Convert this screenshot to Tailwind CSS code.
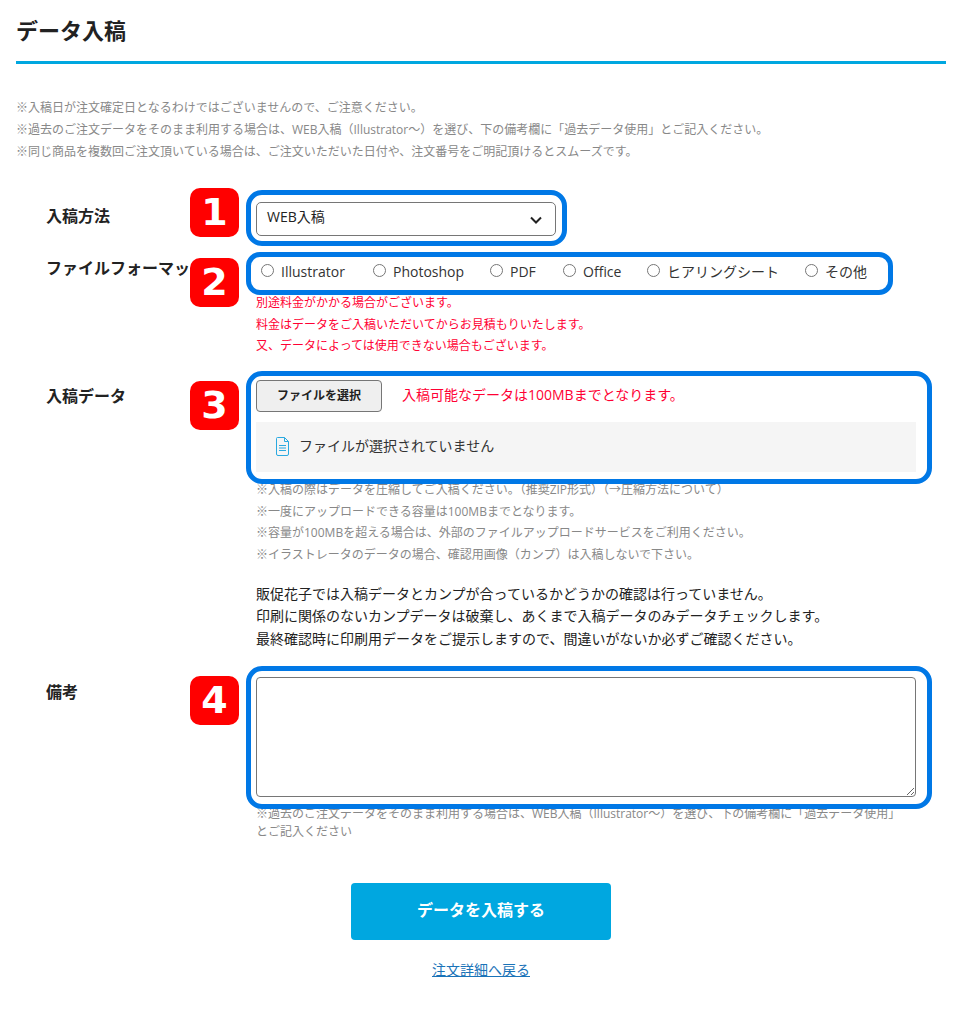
<!DOCTYPE html>
<html lang="ja">
<head>
<meta charset="utf-8">
<title>データ入稿</title>
<script src="https://cdn.jsdelivr.net/npm/@tailwindcss/browser@4"></script>
</head>
<body class="bg-white text-[#222] font-['Open_Sans','Noto_Sans_CJK_JP',sans-serif]">
<div class="relative w-[959px] h-[1023px] overflow-hidden pl-4 pr-[13px]">
  <h2 class="h-[64px] pt-[14px] border-b-[3px] border-[#00a7e0] text-[22px] leading-[32px] font-bold">データ入稿</h2>
  <div class="mt-[33px] text-[12px] leading-[22px] text-[#888]">
    <p>※入稿日が注文確定日となるわけではございませんので、ご注意ください。</p>
    <p>※過去のご注文データをそのまま利用する場合は、WEB入稿（Illustrator～）を選び、下の備考欄に「過去データ使用」とご記入ください。</p>
    <p>※同じ商品を複数回ご注文頂いている場合は、ご注文いただいた日付や、注文番号をご明記頂けるとスムーズです。</p>
  </div>

  <div class="mt-[39px] flex">
    <div class="w-[240px] shrink-0 pl-[30px] pt-[3px] text-[16px] leading-[22px] font-bold">入稿方法</div>
    <div class="relative w-[300px] h-[34px] border border-[#767676] rounded-[5px] pl-[10px] pb-[6px] flex items-center text-[14px]">
      <span>WEB入稿</span>
      <svg class="absolute right-[13px] top-[13px]" width="12" height="8" viewBox="0 0 12 8" fill="none" stroke="#222" stroke-width="2"><path d="M1 1.500 6 6.500 11 1.500"/></svg>
    </div>
  </div>

  <div class="mt-[21px] flex">
    <div class="w-[240px] shrink-0 pl-[30px] text-[16px] leading-[22px] font-bold whitespace-nowrap">ファイルフォーマット</div>
    <div>
      <div class="h-[28px] flex items-center text-[14px] text-[#333]">
        <label class="flex items-center w-[112px]"><input type="radio" name="f" class="w-[13px] h-[13px] ml-[5px] mr-[7px] mb-[2px]">Illustrator</label>
        <label class="flex items-center w-[117px]"><input type="radio" name="f" class="w-[13px] h-[13px] ml-[5px] mr-[7px] mb-[2px]">Photoshop</label>
        <label class="flex items-center w-[73px]"><input type="radio" name="f" class="w-[13px] h-[13px] ml-[5px] mr-[7px] mb-[2px]">PDF</label>
        <label class="flex items-center w-[84px]"><input type="radio" name="f" class="w-[13px] h-[13px] ml-[5px] mr-[7px] mb-[2px]">Office</label>
        <label class="flex items-center w-[158px]"><input type="radio" name="f" class="w-[13px] h-[13px] ml-[5px] mr-[7px] mb-[2px]">ヒアリングシート</label>
        <label class="flex items-center"><input type="radio" name="f" class="w-[13px] h-[13px] ml-[5px] mr-[7px] mb-[2px]">その他</label>
      </div>
      <div class="mt-[7px] text-[12px] leading-[21.5px] text-[#ff0033]">
        <p>別途料金がかかる場合がございます。</p>
        <p>料金はデータをご入稿いただいてからお見積もりいたします。</p>
        <p>又、データによっては使用できない場合もございます。</p>
      </div>
    </div>
  </div>

  <div class="mt-[23px] flex">
    <div class="w-[240px] shrink-0 pl-[30px] pt-[5px] text-[16px] leading-[22px] font-bold">入稿データ</div>
    <div class="w-[660px]">
      <div class="flex items-center h-[32px]">
        <button class="w-[126px] h-[32px] bg-[#efefef] border border-[#767676] rounded-[4px] text-[12px] font-bold">ファイルを選択</button>
        <span class="ml-[20px] text-[14px] text-[#ff0033] mb-[2px]">入稿可能なデータは100MBまでとなります。</span>
      </div>
      <div class="mt-[10px] h-[50px] bg-[#f5f5f5] flex items-center pl-[19px] text-[14px] text-[#333]">
        <svg width="15" height="19" viewBox="0 0 15 19" fill="none" stroke="#2aa9e0" stroke-width="1"><path d="M1.500 1.500a1 1 0 0 1 1-1h7l4 4v12.500a1.500 1.500 0 0 1-1.500 1.500h-9a1.500 1.500 0 0 1-1.500-1.500z"/><path d="M9.500 .5v4h4M4 8.500h7M4 11h7M4 13.500h7"/></svg>
        <span class="ml-[9px] mb-[2px]">ファイルが選択されていません</span>
      </div>
      <div class="mt-[7.5px] text-[12px] leading-[21.5px] text-[#888]">
        <p>※入稿の際はデータを圧縮してご入稿ください。（推奨ZIP形式）（→圧縮方法について）</p>
        <p>※一度にアップロードできる容量は100MBまでとなります。</p>
        <p>※容量が100MBを超える場合は、外部のファイルアップロードサービスをご利用ください。</p>
        <p>※イラストレータのデータの場合、確認用画像（カンプ）は入稿しないで下さい。</p>
      </div>
      <div class="mt-[17.5px] text-[14px] leading-[22.5px] text-[#222]">
        <p>販促花子では入稿データとカンプが合っているかどうかの確認は行っていません。</p>
        <p>印刷に関係のないカンプデータは破棄し、あくまで入稿データのみデータチェックします。</p>
        <p>最終確認時に印刷用データをご提示しますので、間違いがないか必ずご確認ください。</p>
      </div>
    </div>
  </div>

  <div class="mt-[27px] flex">
    <div class="w-[240px] shrink-0 pl-[30px] pt-[4px] text-[16px] leading-[22px] font-bold">備考</div>
    <div class="w-[660px]">
      <textarea class="block w-full h-[120px] border border-[#767676] rounded-[4px]"></textarea>
      <p class="mt-[8px] text-[12px] leading-[18px] text-[#888]">※過去のご注文データをそのまま利用する場合は、WEB入稿（Illustrator～）を選び、下の備考欄に「過去データ使用」<br>とご記入ください</p>
    </div>
  </div>

  <div class="mt-[42px] flex flex-col items-center">
    <button class="w-[260px] h-[57px] pb-[4px] bg-[#00a7e0] rounded-[4px] text-white text-[16px] font-bold">データを入稿する</button>
    <a href="#" class="mt-[19px] text-[14px] leading-[21px] text-[#1a73b8] underline">注文詳細へ戻る</a>
  </div>

  <div class="pointer-events-none absolute left-[246px] top-[190px] w-[321px] h-[56px] border-[5px] border-[#0078e6] rounded-[16px]"></div>
  <div class="pointer-events-none absolute left-[246px] top-[252px] w-[647px] h-[43px] border-[5px] border-[#0078e6] rounded-[14px]"></div>
  <div class="pointer-events-none absolute left-[246px] top-[371px] w-[686px] h-[113px] border-[5px] border-[#0078e6] rounded-[16px]"></div>
  <div class="pointer-events-none absolute left-[246px] top-[666px] w-[686px] h-[143px] border-[5px] border-[#0078e6] rounded-[16px]"></div>

  <div class="absolute left-[190px] top-[188px] w-[49px] h-[49px] rounded-[10px] bg-[#ff0000] text-white text-[38px] font-bold flex items-center justify-center font-['DejaVu_Sans',sans-serif]">1</div>
  <div class="absolute left-[190px] top-[258px] w-[49px] h-[49px] rounded-[10px] bg-[#ff0000] text-white text-[38px] font-bold flex items-center justify-center font-['DejaVu_Sans',sans-serif]">2</div>
  <div class="absolute left-[190px] top-[381px] w-[49px] h-[49px] rounded-[10px] bg-[#ff0000] text-white text-[38px] font-bold flex items-center justify-center font-['DejaVu_Sans',sans-serif]">3</div>
  <div class="absolute left-[190px] top-[676px] w-[49px] h-[49px] rounded-[10px] bg-[#ff0000] text-white text-[38px] font-bold flex items-center justify-center font-['DejaVu_Sans',sans-serif]">4</div>
</div>
</body>
</html>
